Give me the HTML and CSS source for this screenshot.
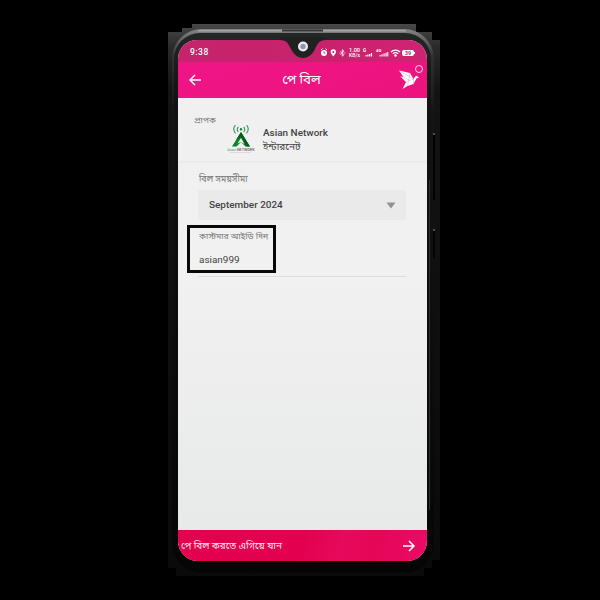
FILE: index.html
```html
<!DOCTYPE html>
<html lang="bn">
<head>
<meta charset="utf-8">
<title>পে বিল</title>
<link rel="stylesheet" href="styles.css">
</head>
<body>
<div class="stage">
  <svg class="device" viewBox="0 0 600 600" aria-hidden="true">
    <defs>
      <linearGradient id="rim" x1="0" y1="0" x2="0" y2="1">
        <stop offset="0" stop-color="#858585"/><stop offset=".05" stop-color="#303131"/><stop offset=".15" stop-color="#151515"/><stop offset="1" stop-color="#050505"/>
      </linearGradient>
      <linearGradient id="halo" x1="0" y1="0" x2="0" y2="1">
        <stop offset="0" stop-color="#484848"/><stop offset=".04" stop-color="#2b2b2b"/><stop offset=".12" stop-color="#131313"/><stop offset="1" stop-color="#0a0a0a"/>
      </linearGradient>
      <linearGradient id="bezel" x1="0" y1="0" x2="0" y2="1">
        <stop offset="0" stop-color="#252727"/><stop offset=".12" stop-color="#111212"/><stop offset="1" stop-color="#060606"/>
      </linearGradient>
    </defs>
    <path d="M192 24H416V32H432V40H440V560H432V568H424V576H176V568H168V32H182V28H192Z" fill="url(#halo)"/>
    <rect x="172" y="29" width="262" height="544" rx="30" fill="url(#rim)"/>
    <path d="M198 30.7H406" stroke="#a2a4a4" stroke-width="1.5"/>
    <path d="M282 30.5H323" stroke="#333" stroke-width="2"/>
    <rect x="174" y="33" width="257" height="536" rx="26" fill="url(#bezel)"/>
    <path d="M429.500 180V510" stroke="#303131" stroke-width="1"/>
    <path d="M434 133V200M434 229V258" stroke="#020202" stroke-width="2"/>
    <path d="M434 133v2M434 229v2" stroke="#999" stroke-width="1"/>
  </svg>
  <main class="screen">
    <div class="status">
      <span class="clock">9:38</span>
      <svg class="status-icons" width="96" height="12" viewBox="0 0 96 12" fill="#fff">
        <circle cx="4" cy="6" r="3"/><path d="M1 3l1.500-1.300M7 3L5.500 1.700" stroke="#fff"/><path d="M4 4.300V6.200H5.300" stroke="#d51a72" stroke-width=".8" fill="none"/>
        <path d="M13.300 9.400C12 7.700 10.600 6.500 10.600 5A2.700 2.700 0 0 1 16 5C16 6.500 14.600 7.700 13.300 9.400Z"/><circle cx="13.300" cy="5" r="1" fill="#c51f6c"/>
        <path d="M20.500 4.200L24 7.700L22.300 9.200V2.700L24 4.200L20.500 7.700M19.500 6h1M24.400 6h1" fill="none" stroke="#fff" stroke-width=".8"/>
        <text x="29" y="5.300" font-size="5.500" font-weight="500" textLength="11" lengthAdjust="spacingAndGlyphs">1.00</text>
        <text x="29" y="10" font-size="4.800" font-weight="500" textLength="11" lengthAdjust="spacingAndGlyphs">KB/s</text>
        <text x="43" y="4.800" font-size="4.500" font-weight="700">G</text><path d="M45.500 8h1.200v1.500h-1.200zM47.300 7.500h1.200v2h-1.200zM49.100 7h1.200v2.500h-1.200zM50.900 6h1.200v3.500h-1.200z"/>
        <text x="56" y="4.800" font-size="4.200" font-weight="700">4G</text><path d="M59.500 8h1.200v1.500h-1.200zM61.500 7.300h1.200v2.200h-1.200zM63.500 6.500h1.200v3h-1.200zM65.500 5.700h1.200v3.800h-1.200zM67.300 5h1v4.500h-1z"/>
        <path d="M71 5C73.500 2.500 77.500 2.500 80 5M72.800 6.900C74.500 5.300 76.500 5.300 78.200 6.900" fill="none" stroke="#fff" stroke-width="1.300"/><circle cx="75.500" cy="8.500" r="1.200"/>
        <rect x="82" y="3" width="12" height="6" rx="2"/><path d="M94 5h1v2h-1z"/><text x="84.800" y="8" font-size="5.600" font-weight="700" fill="#9e3466">39</text>
      </svg>
    </div>
    <header class="appbar">
      <svg class="back" width="14" height="14" viewBox="0 0 14 14"><path d="M13 7H2M7 2L2 7L7 12" fill="none" stroke="#fff" stroke-width="1.500"/></svg>
      <h1>পে বিল</h1>
      <svg class="bird" width="30" height="26" viewBox="0 0 30 26">
        <circle cx="26" cy="5" r="3.500" fill="none" stroke="#ffd6ea" stroke-width="1"/>
        <path d="M6 6.500L17 9L20.500 15L23 11.500L26 13.500L23.500 14.500L20.500 20L14.500 22L9.500 25L13 18L7.500 12.500L10.500 13Z" fill="#fff"/>
        <path d="M6 6.500L20.500 15L13 18M17 9L14.500 22M20.500 15V20M10.500 13L16 16" fill="none" stroke="#f08cbb" stroke-width=".45"/>
      </svg>
    </header>
    <section class="payee">
      <span class="label receiver">প্রাপক</span>
      <svg class="logo" width="30" height="30" viewBox="0 0 30 30">
        <path d="M15 7L24 21.500H19.500L15 17L10.500 21.500H6Z" fill="#07852a"/><path d="M15 7L10 15L15 12L20.500 21.500H24Z" fill="#035d1c"/><path d="M15 13L18.500 19L15 17L11.500 18.500Z" fill="#f2f5f2"/>
        <path d="M12.300 1.800Q10.200 4.500 12.300 7M9.500 0Q6 4 9.500 8.300M17.700 1.800Q19.800 4.500 17.700 7M20.500 0Q24 4 20.500 8.300" fill="none" stroke="#34965a" stroke-width="1.100"/><circle cx="15" cy="4.300" r="1.200" fill="#17843b"/>
        <text x="1.300" y="25.500" font-size="4" textLength="9" lengthAdjust="spacingAndGlyphs" fill="#42a875">Asian</text><text x="11" y="25.500" font-size="4" font-weight="500" textLength="17.500" lengthAdjust="spacingAndGlyphs" fill="#715957">NETWORK</text>
        <path d="M4 27.500H25" stroke="#dccaca" stroke-width=".7"/>
      </svg>
      <div class="payee-name"><strong class="latin">Asian Network</strong><span>ইন্টারনেট</span></div>
    </section>
    <section class="form">
      <div class="label period">বিল সময়সীমা</div>
      <div class="select"><span class="latin">September 2024</span><svg width="10" height="7" viewBox="0 0 10 7"><path d="M.5.500H9.500L5 6.500Z" fill="#929292"/></svg></div>
      <div class="customer"><div class="label idlabel">কাস্টমার আইডি দিন</div><div class="value latin">asian999</div></div>
      <div class="underline"></div>
    </section>
    <footer class="next"><span>পে বিল করতে এগিয়ে যান</span><svg width="14" height="14" viewBox="0 0 14 14"><path d="M1 7H12M7 2L12 7L7 12" fill="none" stroke="#fff" stroke-width="1.500"/></svg></footer>
  </main>
  <svg class="notch" width="46" height="26" viewBox="0 0 46 26" aria-hidden="true"><path d="M0 0H46V3C39 3 37.500 7 34.500 13C29 23.500 17 23.500 11.500 13C8.500 7 7 3 0 3Z" fill="#202222"/><circle cx="23" cy="9.500" r="5" fill="#eceaf2"/><circle cx="23" cy="9.500" r="2.700" fill="#9293ae"/></svg>
</div>
</body>
</html>
```
FILE: styles.css
```css
* { box-sizing: border-box; }
body { margin: 0; background: #000; font-family: Roboto, "Noto Sans Bengali", "Noto Sans", sans-serif; }
.stage { position: relative; width: 600px; height: 600px; padding: 40px 173px 39px 178px; background: #000; overflow: hidden; }
.device { position: absolute; inset: 0; width: 600px; height: 600px; }
.screen { position: relative; display: flex; flex-direction: column; width: 249px; height: 521px; border-radius: 19px 19px 20px 20px; overflow: hidden; background: linear-gradient(#f0f0f0, #f1f1f1 45%, #e7e8e8); color: #444; }
.notch { position: absolute; left: 280px; top: 37px; }
.status { display: flex; height: 22px; padding: 6px 11px 0 12px; justify-content: space-between; background: linear-gradient(90deg, #c5246c, #c9226d 60%, #cf2473); color: #fff; }
.clock { font-size: 8.5px; line-height: 13px; font-weight: 500; letter-spacing: .5px; }
.status-icons { margin-top: 1px; }
.appbar { display: flex; height: 36px; align-items: center; padding: 0 4px 0 10px; background: linear-gradient(160deg, #f01587, #ec137d); color: #fff; }
.appbar h1 { flex: 1; margin: 0; padding-left: 8px; text-align: center; font-size: 13.3px; line-height: 18px; font-weight: 400; }
.bird { align-self: flex-start; margin-top: 2px; }
.payee { display: flex; height: 65px; padding-left: 16px; border-bottom: 2px solid #ebebeb; }
.label { color: #777; font-size: 9px; line-height: 14px; white-space: nowrap; }
.receiver { width: 32px; padding-top: 15px; font-size: 8.6px; }
.logo { margin-top: 27px; }
.payee-name { display: flex; flex-direction: column; margin: 28px 0 0 7px; font-size: 10px; line-height: 14px; white-space: nowrap; }
.payee-name strong { font-weight: 500; }
.latin { width: max-content; font-size: 9px; transform: scaleX(1.105); transform-origin: left center; }
.form { flex: 1; padding: 9px 21px 0 9px; }
.period { margin-left: 12px; font-size: 8.9px; }
.select { display: flex; align-items: center; justify-content: space-between; height: 30px; margin: 4px 0 5px 11px; padding: 0 10px 0 11px; border-radius: 2px; background: #eaeaea; font-weight: 500; }
.customer { width: 89px; height: 48px; padding: 1px 0 0 9px; border: 3px solid #08080b; }
.idlabel { font-size: 8.6px; }
.value { margin-top: 10px; line-height: 15px; }
.underline { height: 1px; margin: 3px 0 0 11px; background: #dedede; }
.next { display: flex; align-items: center; justify-content: space-between; height: 31px; padding: 0 11px 0 3px; background: linear-gradient(100deg, #e3004f 50%, #e60a5c 65%, #e60657 78%, #e90b66); color: #ffe5ef; font-size: 9.9px; line-height: 18px; white-space: nowrap; }
```
